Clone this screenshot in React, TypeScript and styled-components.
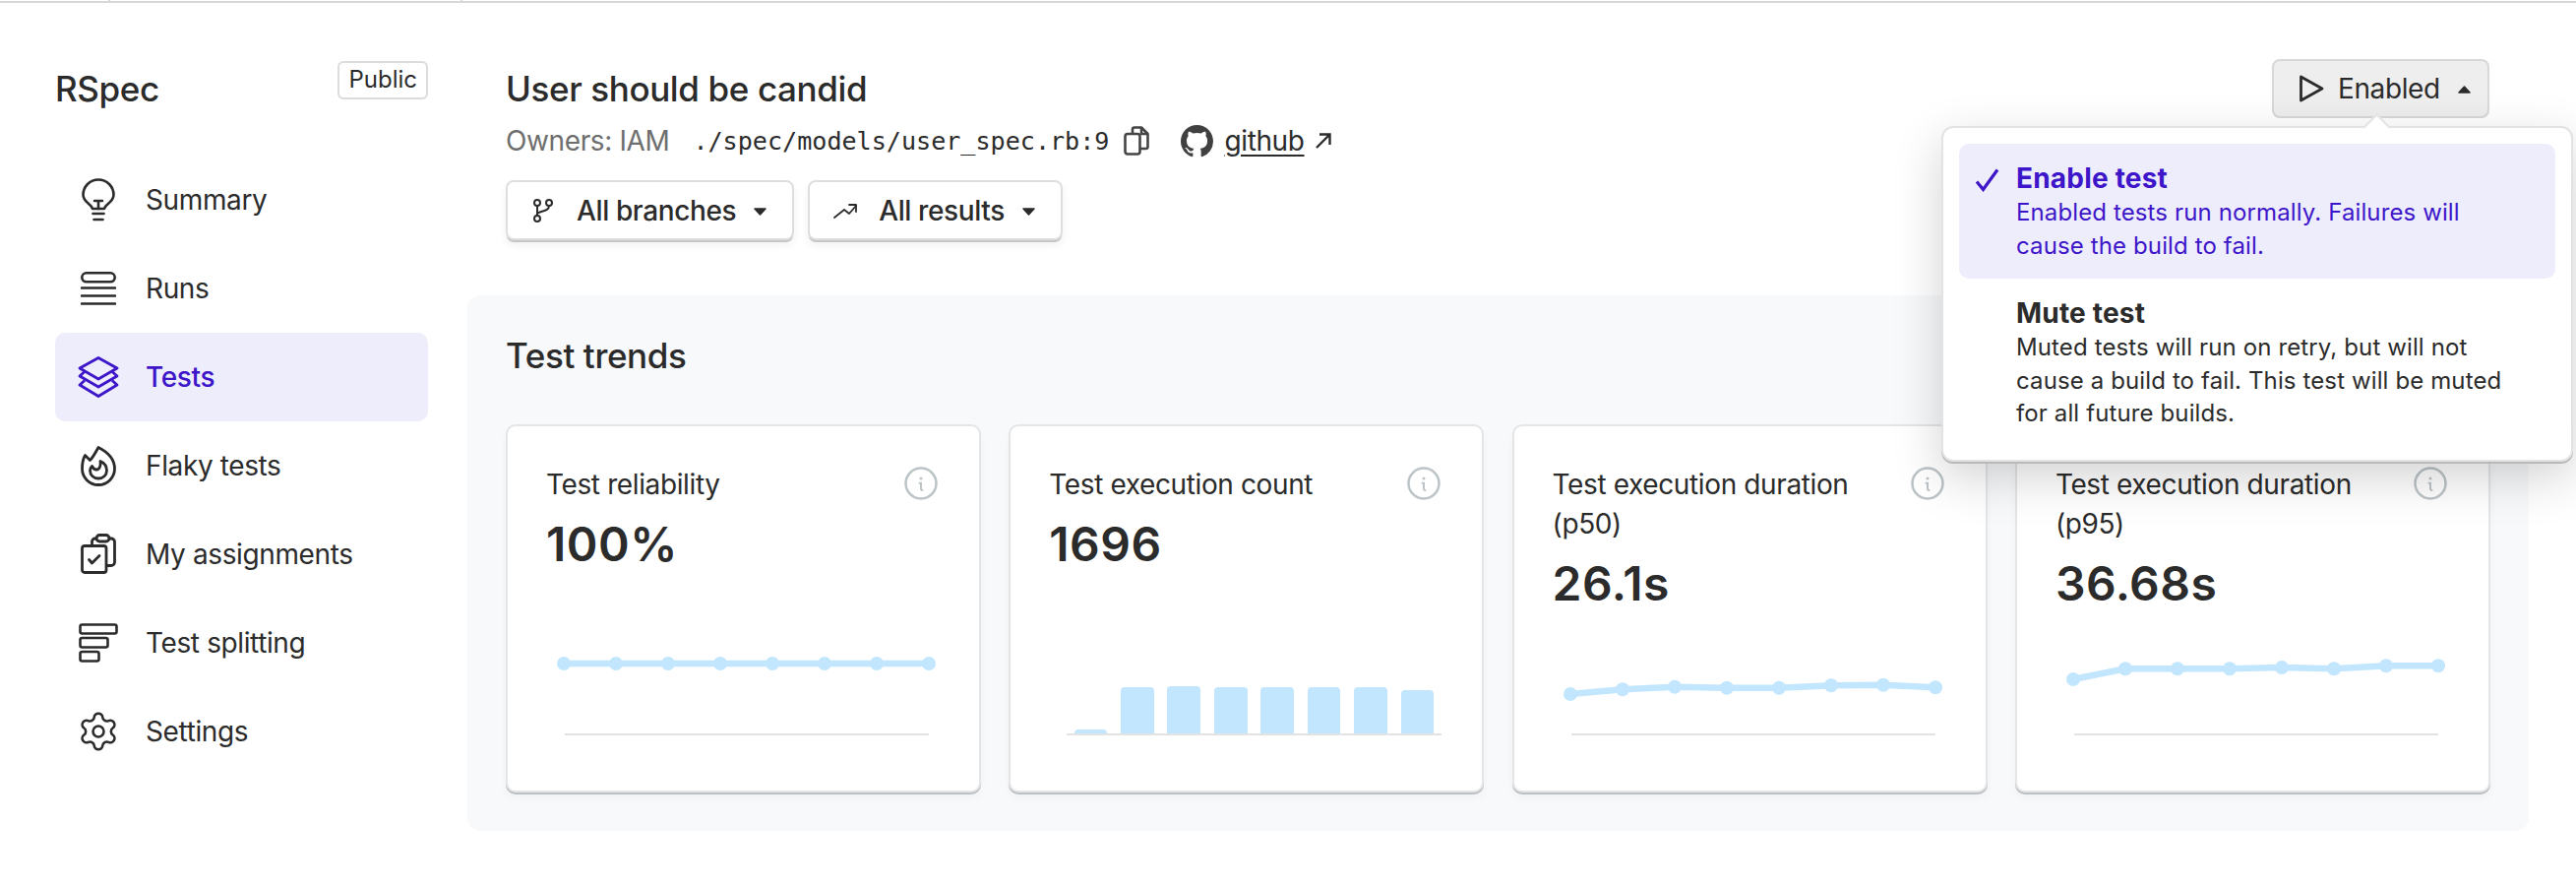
import React from "react";
import styled, { createGlobalStyle } from "styled-components";
import { Settings } from "lucide-react";

const INK = "#2b2b2b";
const ACCENT = "#3d16c9";
const ACCENT_BG = "#eeedfc";
const SKY = "#c2e6fd";

const Global = createGlobalStyle`
  html, body { margin: 0; padding: 0; background: #fff; }
  body { font-family: Inter, "Liberation Sans", sans-serif; color: ${INK}; letter-spacing: -0.38px; }
  * { box-sizing: border-box; }
`;

const TopStrip = styled.div`
  height: 3px;
  border-bottom: 2px solid #d8d8d8;
  display: flex;
  padding-left: 110px;
`;
const TopTick = styled.span`
  width: 2px;
  height: 3px;
  background: #d8d8d8;
  margin-right: 356px;
`;
const Page = styled.div`
  display: flex;
  height: 899px;
  overflow: hidden;
`;
const Sidebar = styled.aside`
  width: 435px;
  flex: none;
  padding: 57px 0 0 56px;
`;
const Brand = styled.div`
  display: flex;
  justify-content: space-between;
  align-items: flex-start;
  height: 60px;
`;
const BrandName = styled.div`
  font-size: 35px;
  font-weight: 500;
  line-height: 60px;
`;
const Badge = styled.span`
  margin-top: 2px;
  height: 39px;
  padding: 0 9px;
  border: 2px solid #dcdcdc;
  border-radius: 6px;
  font-size: 24px;
  line-height: 34px;
  letter-spacing: 0;
`;
const Nav = styled.nav`
  margin-top: 38px;
  display: flex;
  flex-direction: column;
`;
const NavRow = styled.div<{ $active?: boolean }>`
  height: 90px;
  display: flex;
  align-items: center;
  border-radius: 10px;
  font-size: 28px;
  color: ${(p) => (p.$active ? ACCENT : INK)};
  background: ${(p) => (p.$active ? ACCENT_BG : "transparent")};
  font-weight: ${(p) => (p.$active ? 500 : 400)};
`;
const NavIcon = styled.span`
  width: 92px;
  flex: none;
  display: flex;
  justify-content: center;
  padding-right: 4px;
  svg { display: block; }
`;
const Main = styled.main`
  width: 2095px;
  flex: none;
  margin-left: 40px;
  padding-top: 57px;
`;
const Header = styled.header`
  padding: 0 40px 0 39px;
  display: flex;
  justify-content: space-between;
  align-items: flex-start;
`;
const HeaderLeft = styled.div`
  display: flex;
  flex-direction: column;
`;
const Title = styled.h1`
  margin: 0;
  font-size: 35px;
  font-weight: 500;
  line-height: 60px;
`;
const Meta = styled.div`
  height: 46px;
  display: flex;
  align-items: center;
  font-size: 28px;
`;
const Owners = styled.span`
  color: #6e6e6e;
  margin-right: 24px;
`;
const Mono = styled.span`
  font-family: "DejaVu Sans Mono", "Liberation Mono", monospace;
  font-size: 25.1px;
  letter-spacing: 0;
  margin-right: 15px;
`;
const GithubLink = styled.a`
  display: flex;
  align-items: center;
  color: ${INK};
  margin-left: 32px;
  span { text-decoration: underline; text-underline-offset: 4px; margin: 0 10px 0 11px; }
`;
const Filters = styled.div`
  margin-top: 17px;
  display: flex;
  gap: 14px;
`;
const FilterButton = styled.button`
  height: 61px;
  padding: 0 26px 0 24px;
  display: flex;
  align-items: center;
  background: #fff;
  color: ${INK};
  border: 2px solid #dedede;
  border-radius: 8px;
  box-shadow: 0 3px 0 -1px #c4c6c8, 0 5px 8px rgba(0, 0, 0, 0.06);
  font: 500 28px Inter, sans-serif;
  letter-spacing: -0.38px;
`;
const FilterIcon = styled.span`
  width: 24px;
  flex: none;
  display: flex;
  justify-content: center;
`;
const FilterLabel = styled.span`
  margin: 0 18px 0 22px;
`;
const StatusWrap = styled.div`
  position: relative;
`;
const StatusButton = styled.button`
  width: 221px;
  height: 60px;
  padding: 0 0 0 25px;
  display: flex;
  align-items: center;
  background: #eeeeee;
  color: ${INK};
  border: 2px solid #d8d8d8;
  border-radius: 8px;
  font: 400 28px Inter, sans-serif;
  letter-spacing: -0.38px;
`;
const StatusLabel = styled.span`
  margin: 0 18px 0 14px;
`;
const Popover = styled.div`
  position: absolute;
  z-index: 5;
  top: 68px;
  right: -85px;
  width: 642px;
  height: 341px;
  padding: 16px 16px 0;
  background: #fff;
  border: 2px solid #e3e3e3;
  border-radius: 12px;
  box-shadow: 0 2px 0 #b9b9b9, 0 16px 50px rgba(0, 0, 0, 0.18);
`;
const PopArrow = styled.span`
  position: absolute;
  top: -11px;
  left: 431px;
  width: 19px;
  height: 19px;
  background: #fff;
  border-left: 2px solid #e3e3e3;
  border-top: 2px solid #e3e3e3;
  transform: rotate(45deg);
`;
const PopItem = styled.div<{ $selected?: boolean }>`
  position: relative;
  padding: 17px 20px 17px 58px;
  border-radius: 10px;
  background: ${(p) => (p.$selected ? ACCENT_BG : "transparent")};
  color: ${(p) => (p.$selected ? ACCENT : INK)};
`;
const PopCheck = styled.svg`
  position: absolute;
  left: 16px;
  top: 25px;
`;
const PopTitle = styled.div`
  font-size: 28px;
  font-weight: 700;
  line-height: 36px;
  letter-spacing: 0.2px;
`;
const PopText = styled.div`
  max-width: 505px;
  font-size: 24px;
  line-height: 33.6px;
  letter-spacing: 0.12px;
`;
const Panel = styled.section`
  margin-top: 56px;
  height: 544px;
  padding: 40px 39px;
  background: #f8f9fb;
  border-radius: 14px;
`;
const PanelTitle = styled.h2`
  margin: 0;
  font-size: 35px;
  font-weight: 500;
  line-height: 42px;
`;
const Cards = styled.div`
  margin-top: 49px;
  display: grid;
  grid-template-columns: repeat(4, 483px);
  gap: 28.3px;
`;
const Card = styled.article`
  height: 374px;
  padding: 39px 40px 42px 39px;
  display: flex;
  flex-direction: column;
  background: #fff;
  border: 2px solid #e4e5e7;
  border-radius: 10px;
  box-shadow: 0 2px 0 #bcbfc3, 0 6px 10px rgba(0, 0, 0, 0.03);
`;
const CardHead = styled.div`
  display: flex;
  justify-content: space-between;
  align-items: flex-start;
`;
const CardTitle = styled.div`
  max-width: 320px;
  font-size: 28px;
  line-height: 40px;
`;
const CardValue = styled.div`
  margin-top: 11px;
  font-size: 48px;
  font-weight: 600;
  line-height: 60px;
  letter-spacing: 0.5px;
`;
const Chart = styled.svg`
  margin-top: auto;
  display: block;
  flex: none;
`;
const InfoSvg = styled.svg`
  flex: none;
  margin: 2px 2px 0 0;
`;
const CaretSvg = styled.svg`
  flex: none;
  margin-top: 2px;
`;

const Bulb = () => (
  <svg width="34" height="44" viewBox="0 0 34 44" fill="none" stroke="currentColor" strokeWidth="2.6" strokeLinecap="round" strokeLinejoin="round">
    <path d="M11 31C10 26 1.5 24.5 1.5 17a15.5 15.5 0 0 1 31 0c0 7.500-8.500 9-9.500 14Z" />
    <path d="M13 23h8M17 23v8" />
    <path d="M11.500 36h11M12.500 42h9" />
  </svg>
);
const RunsIcon = () => (
  <svg width="36" height="34" viewBox="0 0 36 34" fill="none" stroke="currentColor" strokeWidth="2.600" strokeLinecap="round">
    <rect x="1.300" y="1.300" width="33.400" height="9" rx="4.500" />
    <path d="M1 16.500h34M1 24.500h34M1 32.500h34" />
  </svg>
);
const LayersIcon = () => (
  <svg width="42" height="42" viewBox="0 0 42 42" fill="none" stroke="currentColor" strokeWidth="2.800" strokeLinejoin="round">
    <path d="M21 1.500 40 12 21 23 2 12Z" />
    <path d="M7 15.500 2 20l19 11 19-11-5-4.500" />
    <path d="M7 24.500 2 29l19 11.500L40 29l-5-4.500" />
  </svg>
);
const FlameIcon = () => (
  <svg width="36" height="41" viewBox="0 0 36 41" fill="none" stroke="currentColor" strokeWidth="2.800" strokeLinejoin="round">
    <path d="M18 1.500C15.500 5.500 13 11 9.500 14.500L4.500 9.500C2.500 13 1.500 18 1.500 23a16.500 16.500 0 0 0 33 0C34.500 13 27 6 18 1.500Z" />
    <path d="M11.500 20.500C10 22 9.500 23.500 9.500 25a8.500 8 0 0 0 17 0c0-4.500-3-8-6.500-9.500.5 4-.5 8.500-4 8.500-2 0-3.500-1.500-4.500-3.500Z" />
  </svg>
);
const ClipsIcon = () => (
  <svg width="36" height="42" viewBox="0 0 36 42" fill="none" stroke="currentColor" strokeWidth="2.800" strokeLinejoin="round" strokeLinecap="round">
    <rect x="1.500" y="12.500" width="24.500" height="27" rx="2.500" />
    <path d="m8.500 26.500 3 3.500L19 22.500" />
    <path d="M11.500 10.500V8a3 3 0 0 1 3-3H16M29 5h2a3.500 3.500 0 0 1 3.500 3.500V29a3.500 3.500 0 0 1-3.500 3.500H27" />
    <rect x="16" y="1.500" width="13" height="6.500" rx="3.200" />
  </svg>
);
const SplitIcon = () => (
  <svg width="40" height="40" viewBox="0 0 40 40" fill="none" stroke="currentColor" strokeWidth="2.600">
    <rect x="1.500" y="1.500" width="37" height="9" rx="2" />
    <rect x="1.500" y="15" width="28" height="9.500" rx="2" />
    <rect x="1.500" y="29" width="19" height="9.500" rx="2" />
  </svg>
);
const BranchIcon = () => (
  <svg width="20" height="24" viewBox="0 0 20 24" fill="none" stroke={INK} strokeWidth="2">
    <circle cx="4" cy="4" r="3" />
    <circle cx="16" cy="4" r="3" />
    <circle cx="4" cy="20" r="3" />
    <path d="M4 7v10M16 7c0 5.500-7 5-12 7.500" />
  </svg>
);
const TrendIcon = () => (
  <svg width="24" height="16" viewBox="0 0 24 16" fill="none" stroke={INK} strokeWidth="1.800" strokeLinecap="round" strokeLinejoin="round">
    <path d="M1 15 11 7l5 4 7-8" />
    <path d="M16 2h7v7" />
  </svg>
);
const CopyIcon = () => (
  <svg width="26" height="30" viewBox="0 0 26 30" fill="none" stroke="#444" strokeWidth="2.600" strokeLinejoin="round">
    <rect x="1.500" y="8" width="15" height="20.500" rx="2.500" />
    <path d="M9 8V3.500a2 2 0 0 1 2-2h7L24.500 8V21a2 2 0 0 1-2 2h-6" />
    <path d="M18 1.500V8h6.500" />
  </svg>
);
const GithubMark = () => (
  <svg width="33" height="33" viewBox="0 0 16 16" fill="#404040">
    <path d="M8 0C3.58 0 0 3.58 0 8c0 3.54 2.29 6.53 5.47 7.59.4.07.55-.17.55-.38 0-.19-.01-.82-.01-1.49-2.01.37-2.53-.49-2.69-.94-.09-.23-.48-.94-.82-1.13-.28-.15-.68-.52-.01-.53.63-.01 1.08.58 1.23.82.72 1.21 1.87.87 2.33.66.07-.52.28-.87.51-1.07-1.78-.2-3.64-.89-3.64-3.95 0-.87.31-1.59.82-2.15-.08-.2-.36-1.02.08-2.12 0 0 .67-.21 2.2.82.64-.18 1.32-.27 2-.27.68 0 1.36.09 2 .27 1.53-1.04 2.2-.82 2.2-.82.44 1.1.16 1.92.08 2.12.51.56.82 1.27.82 2.15 0 3.07-1.87 3.75-3.65 3.95.29.25.54.73.54 1.48 0 1.07-.01 1.93-.01 2.2 0 .21.15.46.55.38A8.013 8.013 0 0 0 16 8c0-4.42-3.58-8-8-8z" />
  </svg>
);
const ExternalIcon = () => (
  <svg width="18" height="18" viewBox="0 0 18 18" fill="none" stroke={INK} strokeWidth="2.400">
    <path d="M2 16 15.500 2.500M5 2.500h10.500V13" />
  </svg>
);
const Caret = ({ up }: { up?: boolean }) => (
  <CaretSvg width="13" height="8" viewBox="0 0 13 8" fill={INK} stroke={INK} strokeWidth="1.500" strokeLinejoin="round">
    <path d={up ? "M6.500 1 12 7H1Z" : "M1 1h11L6.500 7Z"} />
  </CaretSvg>
);
const PlayIcon = () => (
  <svg width="26" height="28" viewBox="0 0 26 28" fill="none" stroke={INK} strokeWidth="2.800" strokeLinejoin="round">
    <path d="M2.500 2 24 14 2.500 26Z" />
  </svg>
);
const InfoIcon = () => (
  <InfoSvg width="34" height="34" viewBox="0 0 34 34" fill="none" stroke="#bcc4c8" strokeWidth="2.500" strokeLinecap="round">
    <circle cx="17" cy="17" r="15.500" />
    <path d="M15.500 16.800H17v5.500c0 1 .5 1.700 1.500 1.700" strokeWidth="2" />
    <circle cx="17" cy="12" r="0.700" strokeWidth="1.600" />
  </InfoSvg>
);

const xs = [18, 71, 124, 177, 230, 283, 336, 389];

const LineChart = ({ ys }: { ys: number[] }) => (
  <Chart width="403" height="130" viewBox="0 0 403 130">
    <path d="M19 115H389" stroke="#e3e3e3" strokeWidth="2" />
    <polyline points={ys.map((y, i) => `${xs[i]},${y}`).join(" ")} fill="none" stroke={SKY} strokeWidth="6.500" />
    {ys.map((y, i) => (
      <circle key={i} cx={xs[i]} cy={y} r="7" fill={SKY} />
    ))}
  </Chart>
);

const bars: [number, number, number][] = [
  [26, 59, 110], [73, 107, 67], [120, 154, 66], [168, 202, 67],
  [215, 249, 67], [263, 296, 67], [310, 344, 67], [358, 391, 70],
];
const BarChart = () => (
  <Chart width="403" height="130" viewBox="0 0 403 130">
    {bars.map(([a, b, t]) => (
      <path key={a} d={`M${a} 114V${t + 4}a4 4 0 0 1 4-4H${b - 4}a4 4 0 0 1 4 4V114Z`} fill={SKY} />
    ))}
    <path d="M18 115H399" stroke="#e3e3e3" strokeWidth="2" />
  </Chart>
);

const navItems = [
  { label: "Summary", icon: <Bulb /> },
  { label: "Runs", icon: <RunsIcon /> },
  { label: "Tests", icon: <LayersIcon />, active: true },
  { label: "Flaky tests", icon: <FlameIcon /> },
  { label: "My assignments", icon: <ClipsIcon /> },
  { label: "Test splitting", icon: <SplitIcon /> },
  { label: "Settings", icon: <Settings size={44} strokeWidth={1.4} /> },
];

const cards = [
  { title: "Test reliability", value: "100%", chart: <LineChart ys={[43, 43, 43, 43, 43, 43, 43, 43]} /> },
  { title: "Test execution count", value: "1696", chart: <BarChart /> },
  { title: "Test execution duration (p50)", value: "26.1s", chart: <LineChart ys={[74, 69.3, 66.7, 67.7, 67.7, 65.3, 64.7, 67.3]} /> },
  { title: "Test execution duration (p95)", value: "36.68s", chart: <LineChart ys={[59, 48.3, 48.3, 48.3, 47, 48.3, 45.3, 45.3]} /> },
];

export default function App() {
  return (
    <>
      <Global />
      <TopStrip>
        <TopTick />
        <TopTick />
      </TopStrip>
      <Page>
        <Sidebar>
          <Brand>
            <BrandName>RSpec</BrandName>
            <Badge>Public</Badge>
          </Brand>
          <Nav>
            {navItems.map((n) => (
              <NavRow key={n.label} $active={n.active}>
                <NavIcon>{n.icon}</NavIcon>
                {n.label}
              </NavRow>
            ))}
          </Nav>
        </Sidebar>
        <Main>
          <Header>
            <HeaderLeft>
              <Title>User should be candid</Title>
              <Meta>
                <Owners>Owners: IAM</Owners>
                <Mono>./spec/models/user_spec.rb:9</Mono>
                <CopyIcon />
                <GithubLink>
                  <GithubMark />
                  <span>github</span>
                  <ExternalIcon />
                </GithubLink>
              </Meta>
              <Filters>
                <FilterButton>
                  <FilterIcon><BranchIcon /></FilterIcon>
                  <FilterLabel>All branches</FilterLabel>
                  <Caret />
                </FilterButton>
                <FilterButton>
                  <FilterIcon><TrendIcon /></FilterIcon>
                  <FilterLabel>All results</FilterLabel>
                  <Caret />
                </FilterButton>
              </Filters>
            </HeaderLeft>
            <StatusWrap>
              <StatusButton>
                <PlayIcon />
                <StatusLabel>Enabled</StatusLabel>
                <Caret up />
              </StatusButton>
              <Popover>
                <PopArrow />
                <PopItem $selected>
                  <PopCheck width="26" height="24" viewBox="0 0 26 24" fill="none" stroke={ACCENT} strokeWidth="3.200">
                    <path d="M2 13.500 8.500 21.500 23 1.500" />
                  </PopCheck>
                  <PopTitle>Enable test</PopTitle>
                  <PopText>Enabled tests run normally. Failures will cause the build to fail.</PopText>
                </PopItem>
                <PopItem>
                  <PopTitle>Mute test</PopTitle>
                  <PopText>Muted tests will run on retry, but will not cause a build to fail. This test will be muted for all future builds.</PopText>
                </PopItem>
              </Popover>
            </StatusWrap>
          </Header>
          <Panel>
            <PanelTitle>Test trends</PanelTitle>
            <Cards>
              {cards.map((c) => (
                <Card key={c.title}>
                  <CardHead>
                    <CardTitle>{c.title}</CardTitle>
                    <InfoIcon />
                  </CardHead>
                  <CardValue>{c.value}</CardValue>
                  {c.chart}
                </Card>
              ))}
            </Cards>
          </Panel>
        </Main>
      </Page>
    </>
  );
}
